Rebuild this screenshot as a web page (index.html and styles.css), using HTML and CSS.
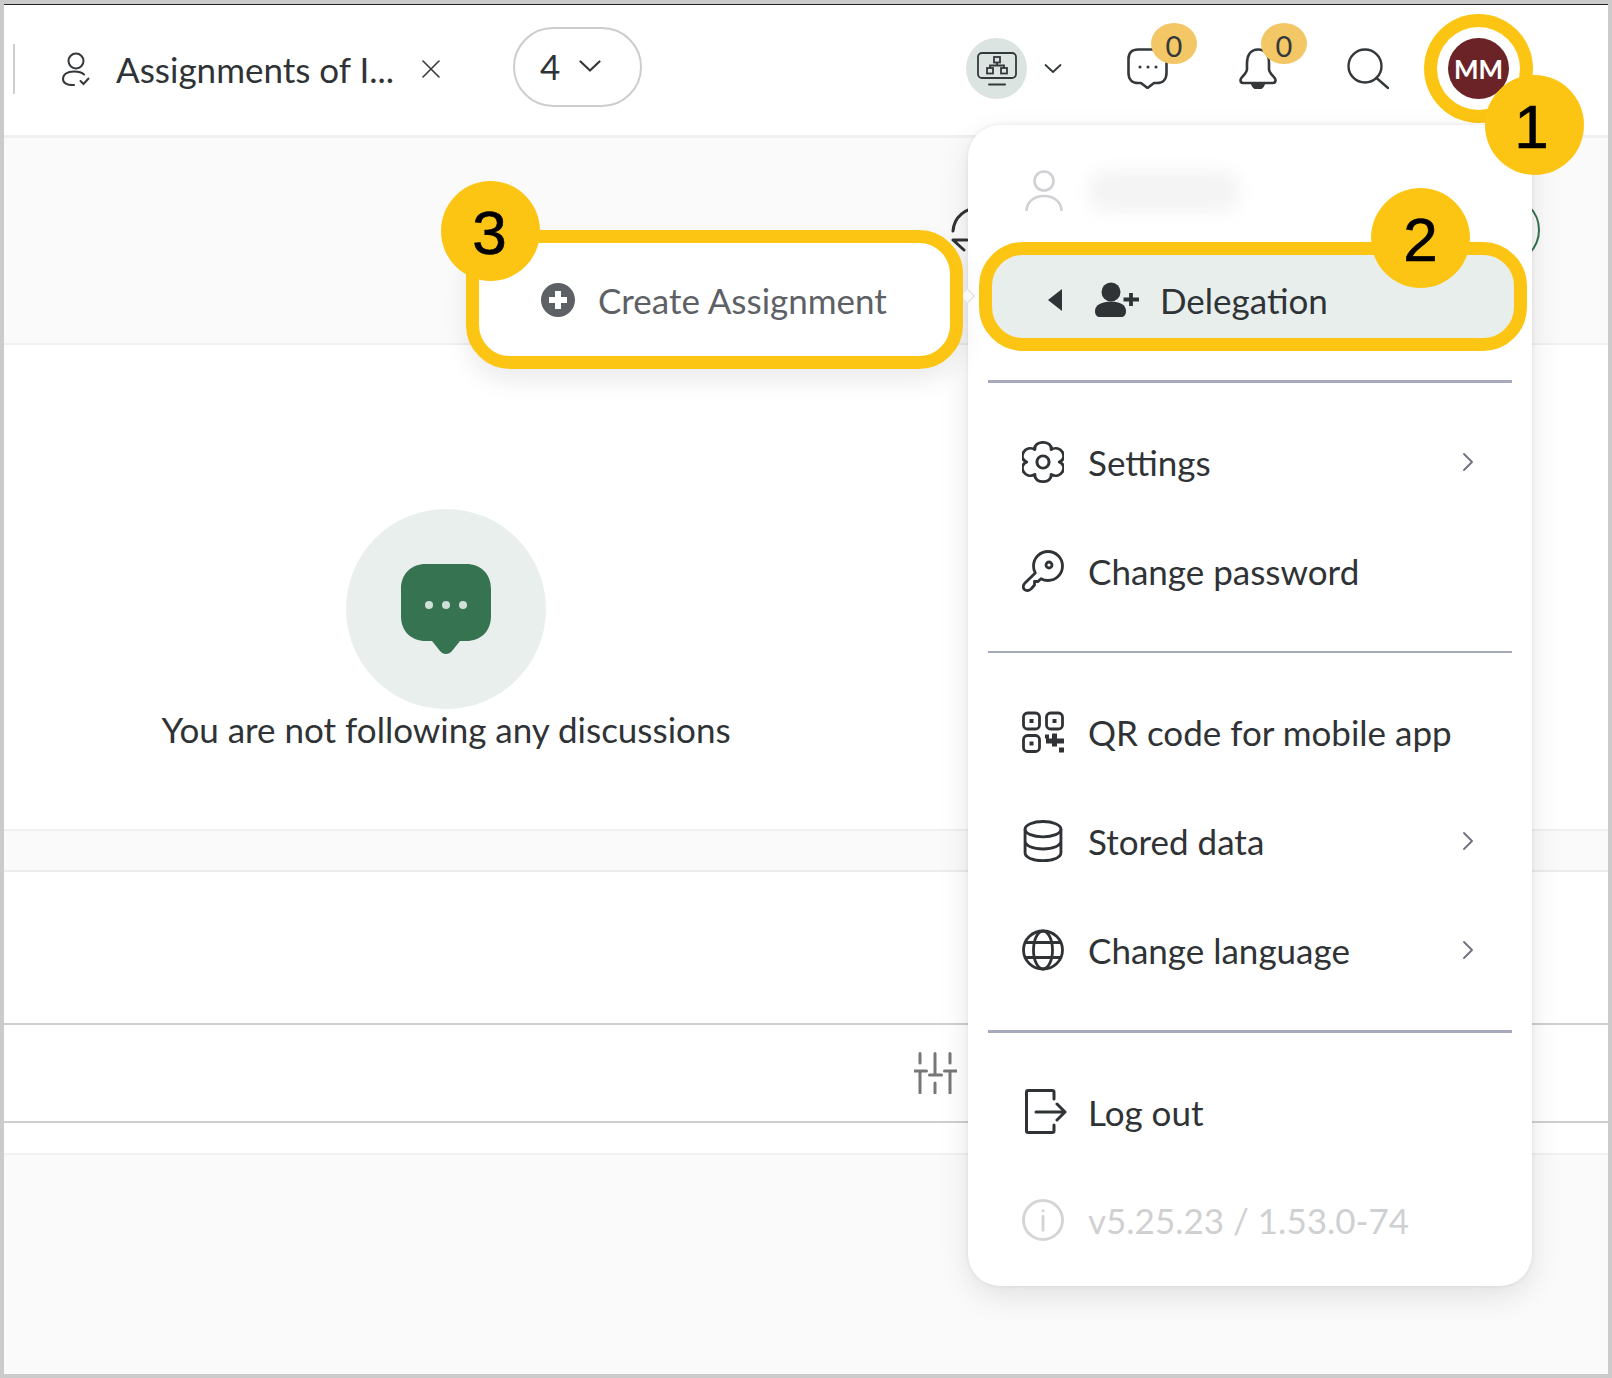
FILE: index.html
```html
<!DOCTYPE html>
<html lang="en">
<head>
<meta charset="utf-8">
<title>Assignments</title>
<link rel="stylesheet" href="styles.css">
</head>
<body>
<div class="frame">
  <header class="topbar">
    <span class="tab-rule"></span>
    <svg class="tab-user" viewBox="0 0 28 34" fill="none" stroke="#34383b" stroke-width="2" stroke-linecap="round"><circle cx="14" cy="9" r="7.5"/><path d="M22 22.500C19.500 20 16 19.500 12 19.500C5 19.500 1 22.500 1 27C1 31 5 33.500 12 33"/><path d="M18.500 29l3 3 5-5.500"/></svg>
    <span class="tab-title">Assignments of I...</span>
    <svg class="tab-close" viewBox="0 0 18 18" stroke="#34383b" stroke-width="1.600" stroke-linecap="round"><path d="M1 1l16 16M17 1L1 17"/></svg>
    <button class="count-pill"><span>4</span><svg viewBox="0 0 22 12" fill="none" stroke="#34383b" stroke-width="2.200" stroke-linecap="round" stroke-linejoin="round"><path d="M1.500 1.500L11 10.500l9.500-9"/></svg></button>
    <span class="org-btn"><svg viewBox="0 0 40 35" fill="none" stroke="#34383b" stroke-width="1.800"><rect x="1" y="1" width="38" height="25" rx="4"/><path d="M12 32.500h16" stroke-width="2" stroke-linecap="round"/><rect x="17" y="5" width="6" height="5.500"/><rect x="10" y="16" width="6" height="5.500"/><rect x="24" y="16" width="6" height="5.500"/><path d="M20 10.500v3M13 16v-2.500h14V16"/></svg></span>
    <svg class="org-caret" viewBox="0 0 18 9" fill="none" stroke="#34383b" stroke-width="1.800" stroke-linecap="round" stroke-linejoin="round"><path d="M1.500 1L9 8l7.500-7"/></svg>
    <span class="icon-wrap chat">
      <svg viewBox="0 0 41 41" fill="none" stroke="#34383b" stroke-width="2.600" stroke-linejoin="round"><path d="M11 1.500H30C36 1.500 39.500 5 39.500 11V25C39.500 31 36 35 30 35H27L20.500 40L14 35H11C5 35 1.500 31 1.500 25V11C1.500 5 5 1.500 11 1.500Z"/><g fill="#34383b" stroke="none"><circle cx="13" cy="19" r="1.500"/><circle cx="21" cy="19" r="1.500"/><circle cx="29" cy="19" r="1.500"/></g></svg>
      <span class="count-badge">0</span>
    </span>
    <span class="icon-wrap bell">
      <svg viewBox="0 0 38 41" fill="none" stroke="#34383b" stroke-width="2.600" stroke-linejoin="round"><path d="M19 1.500C11 1.500 8 8 8 15V21C8 26 1.500 29 1.500 32C1.500 34 2.500 35 4 35H34C35.500 35 36.500 34 36.500 32C36.500 29 30 26 30 21V15C30 8 27 1.500 19 1.500Z"/><path d="M13 35.500C14 39 16 40.500 19 40.500C22 40.500 24 39 25 35.500Z" fill="#34383b"/></svg>
      <span class="count-badge">0</span>
    </span>
    <svg class="search" viewBox="0 0 42 41" fill="none" stroke="#34383b" stroke-width="2.400" stroke-linecap="round"><circle cx="18" cy="18" r="16.500"/><path d="M29.500 30L41 40"/></svg>
    <span class="avatar">MM</span>
  </header>

  <section class="band toolbar">
    <svg class="refresh" viewBox="0 0 40 50" fill="none" stroke="#2f3336" stroke-width="3" stroke-linecap="round" stroke-linejoin="round"><path d="M30 2C14 3 3 12 2 26"/><path d="M2 35h14M2 35l11 10"/></svg>
    <span class="green-ring"></span>
  </section>

  <section class="empty">
    <span class="empty-disc"><svg viewBox="0 0 90 90" fill="#367350"><path d="M25 0H65C80 0 90 10 90 25V52C90 67 80 77 65 77H59L51 87C48 91 42 91 39 87L31 77H25C10 77 0 67 0 52V25C0 10 10 0 25 0Z"/><g fill="#cfe0d6"><circle cx="28" cy="41" r="4"/><circle cx="45" cy="41" r="4"/><circle cx="62" cy="41" r="4"/></g></svg></span>
    <p class="empty-text">You are not following any discussions</p>
  </section>
  <div class="band spacer"></div>
  <div class="blank"></div>
  <div class="filters">
    <svg viewBox="0 0 43 42" fill="none" stroke="#777" stroke-width="3" stroke-linecap="round"><path d="M6 1.500V11M0.500 19H12.500M6 19V41M21 1.500V23M15.500 23H27.500M21 31V41M36 1.500V11M30.500 19H42.500M36 19V41"/></svg>
  </div>
  <div class="tail"></div>
  <div class="rest"></div>

  <aside class="menu">
    <div class="menu-user">
      <svg viewBox="0 0 38 42" fill="none" stroke="#cfd1d4" stroke-width="2.600"><circle cx="19" cy="11" r="9.500"/><path d="M1.500 41C1.500 32 9 26 19 26C29 26 36.500 32 36.500 41"/></svg>
      <span class="redacted"></span>
    </div>
    <div class="menu-delegation">
      <svg class="back" viewBox="0 0 14 22" fill="#2f3336"><path d="M14 0V22L0 11Z"/></svg>
      <svg class="deleg-icon" viewBox="0 0 44 35" fill="#2f3336"><circle cx="16" cy="10" r="9.500"/><path d="M0 29C0 23 7 19.500 16 19.500C25 19.500 31 23 31 29C31 33 29 35 26 35H5C2 35 0 33 0 29Z"/><path d="M28.500 17.500h15.500M36 11v13" fill="none" stroke="#2f3336" stroke-width="3.800"/></svg>
      <span>Delegation</span>
    </div>
    <hr class="rule thick first">
    <div class="menu-group">
      <div class="menu-row">
        <svg viewBox="3 -.5 36 41" preserveAspectRatio="none" fill="none" stroke="#2f3336" stroke-width="2.600" stroke-linejoin="round"><path d="M14 7.880C13.130 -1.600 28.870 -1.600 28 7.880C35.790 2.380 43.650 16 35 20C43.650 24 35.790 37.620 28 32.120C28.870 41.600 13.130 41.600 14 32.120C6.210 37.620 -1.650 24 7 20C-1.650 16 6.210 2.380 14 7.880Z"/><ellipse cx="21" cy="20" rx="5.200" ry="6"/></svg>
        <span>Settings</span>
        <svg class="chev" viewBox="0 0 10 18" fill="none" stroke="#6e7280" stroke-width="1.800" stroke-linecap="round" stroke-linejoin="round"><path d="M1 1l8 8-8 8"/></svg>
      </div>
      <div class="menu-row">
        <svg viewBox="0 0 42 42" fill="none" stroke="#2f3336" stroke-width="2.800" stroke-linejoin="round"><path d="M26 1.500C34 1.500 40.500 8 40.500 16C40.500 24 34 30.500 26 30.500C23.500 30.500 21 29.800 19 28.700L16 31.500H12.500V35L9.500 38.500C7.500 41 4 41 2.500 39.500C.8 38 .8 35 3 33L13.300 23C12 21 11.500 18.500 11.500 16C11.500 8 18 1.500 26 1.500Z"/><circle cx="27" cy="15" r="3"/></svg>
        <span>Change password</span>
      </div>
    </div>
    <hr class="rule mid">
    <div class="menu-group">
      <div class="menu-row">
        <svg viewBox="0 0 42 41" fill="none" stroke="#2f3336" stroke-width="2.800"><rect x="1.500" y="1.500" width="16" height="16" rx="4"/><rect x="24.500" y="1.500" width="16" height="16" rx="4"/><rect x="1.500" y="24" width="16" height="16" rx="4"/><g fill="#2f3336" stroke="none"><rect x="7.500" y="7.500" width="4" height="4"/><rect x="30.500" y="7.500" width="4" height="4"/><rect x="7.500" y="30" width="4" height="4"/><path d="M30 22h5v5h7v5h-7v3h-5v-3h-6v-5h6zM23 23h4v4h-4zM37 36h5v5h-5z"/></g></svg>
        <span>QR code for mobile app</span>
      </div>
      <div class="menu-row">
        <svg viewBox="0 0 38 41" fill="none" stroke="#2f3336" stroke-width="2.800"><ellipse cx="19" cy="9" rx="17.500" ry="7.500"/><path d="M1.500 9V32C1.500 36.500 9 39.800 19 39.800C29 39.800 36.500 36.500 36.500 32V9M1.500 20.500C1.500 25 9 28.300 19 28.300C29 28.300 36.500 25 36.500 20.500"/></svg>
        <span>Stored data</span>
        <svg class="chev" viewBox="0 0 10 18" fill="none" stroke="#6e7280" stroke-width="1.800" stroke-linecap="round" stroke-linejoin="round"><path d="M1 1l8 8-8 8"/></svg>
      </div>
      <div class="menu-row">
        <svg viewBox="0 0 42 41" fill="none" stroke="#2f3336" stroke-width="2.800"><ellipse cx="21" cy="20.500" rx="19.500" ry="19"/><ellipse cx="21" cy="20.500" rx="9.500" ry="19"/><path d="M3.500 13H38.500M3.500 28H38.500"/></svg>
        <span>Change language</span>
        <svg class="chev" viewBox="0 0 10 18" fill="none" stroke="#6e7280" stroke-width="1.800" stroke-linecap="round" stroke-linejoin="round"><path d="M1 1l8 8-8 8"/></svg>
      </div>
    </div>
    <hr class="rule thick last">
    <div class="menu-group">
      <div class="menu-row">
        <svg class="logout" viewBox="0 0 42 45" fill="none" stroke="#2f3336" stroke-width="3" stroke-linecap="round" stroke-linejoin="round"><path d="M29 10V3C29 2 28 1.500 27 1.500H3C2 1.500 1.500 2 1.500 3V42C1.500 43 2 43.500 3 43.500H27C28 43.500 29 43 29 42V36"/><path d="M11 23H40M32 15l8 8-8 8"/></svg>
        <span>Log out</span>
      </div>
      <div class="menu-row version">
        <svg viewBox="0 0 43 43" fill="none" stroke="#d4d5d7" stroke-width="3"><circle cx="21.500" cy="21.500" r="20"/><path d="M21.500 18V32" stroke-linecap="round"/><circle cx="21.500" cy="12" r="1.600" fill="#d4d5d7" stroke="none"/></svg>
        <span>v5.25.23 / 1.53.0-74</span>
      </div>
    </div>
  </aside>

  <span class="notch"></span>
  <div class="create-callout">
    <svg viewBox="0 0 34 34"><circle cx="17" cy="17" r="17" fill="#5d6166"/><path d="M17 8v18M8 17h18" stroke="#fff" stroke-width="6"/></svg>
    <span>Create Assignment</span>
  </div>
  <span class="marker m1">1</span>
  <span class="marker m2">2</span>
  <span class="marker m3">3</span>
</div>
</body>
</html>
```

FILE: styles.css
```css
* { box-sizing: border-box; }
html, body { margin: 0; padding: 0; }
body { font-family: "Lato", "Liberation Sans", sans-serif; color: #2f3336; background: #fff; }

.frame {
  position: relative;
  width: 1612px;
  height: 1378px;
  border: 4px solid #cbcbcb;
  background: #fff;
  display: flex;
  flex-direction: column;
  overflow: hidden;
}

/* top bar */
.topbar {
  flex: none;
  height: 134px;
  border-top: 1px solid #222;
  border-bottom: 3px solid #f0f0f0;
  padding-bottom: 3px;
  display: flex;
  align-items: center;
}
.topbar > * { flex: none; }
.tab-rule { width: 2px; height: 50px; margin-left: 9px; background: #cfcfcf; }
.tab-user { width: 28px; height: 34px; margin-left: 47px; }
.tab-title { width: 280px; margin-left: 26px; font-size: 35px; line-height: 44px; white-space: nowrap; }
.tab-close { width: 18px; height: 18px; margin-left: 26px; }
.count-pill {
  width: 129px; height: 80px; margin-left: 73px; margin-top: -4px;
  border: 2px solid #cdcdcd; border-radius: 40px; background: #fff;
  display: flex; align-items: center; gap: 19px; padding: 0 0 2px 25px;
  font: 35px "Lato", sans-serif; color: #2f3336;
}
.count-pill svg { width: 22px; height: 12px; }
.org-btn {
  width: 61px; height: 61px; margin-left: 324px; border-radius: 50%;
  background: #dbe4e1; display: flex; align-items: center; justify-content: center;
  padding-top: 2px;
}
.org-btn svg { width: 40px; height: 35px; }
.org-caret { width: 18px; height: 9px; margin-left: 17px; }
.icon-wrap { position: relative; display: block; }
.icon-wrap svg { display: block; width: 100%; height: 41px; }
.chat { width: 41px; margin-left: 65px; }
.bell { width: 38px; margin-left: 71px; }
.count-badge {
  position: absolute; left: 24px; top: -25px;
  width: 46px; height: 41px; border-radius: 50%;
  background: #f3c766; color: #34383b;
  font-size: 29px; line-height: 46px; text-align: center;
}
.bell .count-badge { left: 22px; }
.search { width: 42px; height: 41px; margin-left: 70px; }
.avatar {
  width: 61px; height: 61px; margin-left: 59px; border-radius: 50%;
  background: #6b2328; color: #fff;
  font-size: 26px; font-weight: 700; line-height: 63px; text-align: center;
  box-shadow: 0 0 0 11px #fff, 0 0 0 24px #fdc513;
}

/* page bands */
.band { flex: none; background: #fafafa; border-bottom: 2px solid #f0f0f0; }
.toolbar { height: 207px; display: flex; align-items: center; padding: 0 0 22px 947px; }
.refresh { width: 40px; height: 50px; flex: none; }
.green-ring {
  flex: none; width: 68px; height: 68px; margin-left: 481px;
  border: 2px solid #367350; border-radius: 50%;
}
.empty {
  flex: none; height: 484px; padding-top: 164px; width: 884px;
  display: flex; flex-direction: column; align-items: center;
}
.empty-disc {
  width: 200px; height: 200px; border-radius: 50%; background: #e9efed;
  display: flex; align-items: center; justify-content: center;
}
.empty-disc svg { width: 90px; height: 90px; }
.empty-text { margin: -2px 0 0; font-size: 35px; line-height: 44px; white-space: nowrap; }
.spacer { height: 43px; border-top: 2px solid #f0f0f0; border-bottom-color: #ececec; }
.blank { flex: none; height: 153px; border-bottom: 2px solid #cfcfcf; }
.filters {
  flex: none; height: 98px; border-bottom: 2px solid #cfcfcf;
  display: flex; align-items: center; padding-left: 910px;
}
.filters svg { width: 43px; height: 42px; }
.tail { flex: none; height: 32px; border-bottom: 2px solid #f1f1f1; }
.rest { flex: 1; background: #fafafa; }

/* profile menu */
.menu {
  position: absolute; left: 964px; top: 121px; width: 564px; height: 1161px;
  background: #fff; border-radius: 32px;
  box-shadow: 0 0 4px rgba(0,0,0,.08), 0 10px 30px rgba(0,0,0,.1);
}
.menu-user { height: 117px; padding: 15px 0 0 57px; display: flex; align-items: center; gap: 26px; }
.menu-user svg { width: 38px; height: 42px; }
.redacted { width: 150px; height: 40px; background: #f3f3f3; border-radius: 16px; filter: blur(9px); }
.menu-delegation {
  position: relative;
  width: 548px; height: 109px; margin-left: 11px;
  border: 13px solid #fdc513; border-radius: 44px; background: #e8eeec;
  display: flex; align-items: center; padding: 6px 0 0 56px; font-size: 35px;
}
.back { width: 14px; height: 22px; flex: none; }
.deleg-icon { width: 44px; height: 35px; flex: none; margin: 0 21px 0 33px; }
.rule { border: 0; margin: 0 0 0 20px; width: 524px; background: #a7aabd; }
.rule.thick { height: 3px; }
.rule.mid { height: 2px; margin-top: 26px; }
.rule.first { margin-top: 29px; }
.rule.last { margin-top: 26px; }
.menu-group { margin-top: 24px; display: flex; flex-direction: column; }
.menu-row {
  height: 109px; display: flex; align-items: center;
  padding: 0 59px 0 54px; font-size: 35px;
}
.menu-row > svg:first-child { width: 42px; height: 42px; margin-right: 24px; flex: none; }
.menu-row > svg.logout { width: 42px; height: 45px; margin-left: 3px; margin-right: 21px; }
.chev { width: 10px; height: 18px; margin-left: auto; flex: none; }
.version { color: #cfd0d2; height: 107px; }

/* annotations */
.notch {
  position: absolute; left: 959px; top: 287px; width: 10px; height: 10px;
  background: #fff; transform: rotate(45deg);
  border-top: 1px solid #e4e4e4; border-right: 1px solid #e4e4e4;
}
.create-callout {
  position: absolute; left: 462px; top: 226px; width: 497px; height: 139px;
  border: 13px solid #fdc513; border-radius: 44px; background: #fff;
  box-shadow: 0 12px 24px rgba(0,0,0,.08);
  display: flex; align-items: center; padding-left: 62px; gap: 23px;
  font-size: 35px; color: #5d6166;
}
.create-callout svg { width: 34px; height: 34px; flex: none; }
.marker {
  position: absolute; width: 99px; height: 100px; border-radius: 50%;
  background: #fdc513; color: #000;
  font: 62px/104px "Liberation Sans", Arial, sans-serif; text-align: center;
  -webkit-text-stroke: .7px #000;
}
.m1 { left: 1481px; top: 71px; padding-right: 6px; }
.m2 { left: 1367px; top: 184px; }
.m3 { left: 437px; top: 177px; padding-right: 2px; }
```
